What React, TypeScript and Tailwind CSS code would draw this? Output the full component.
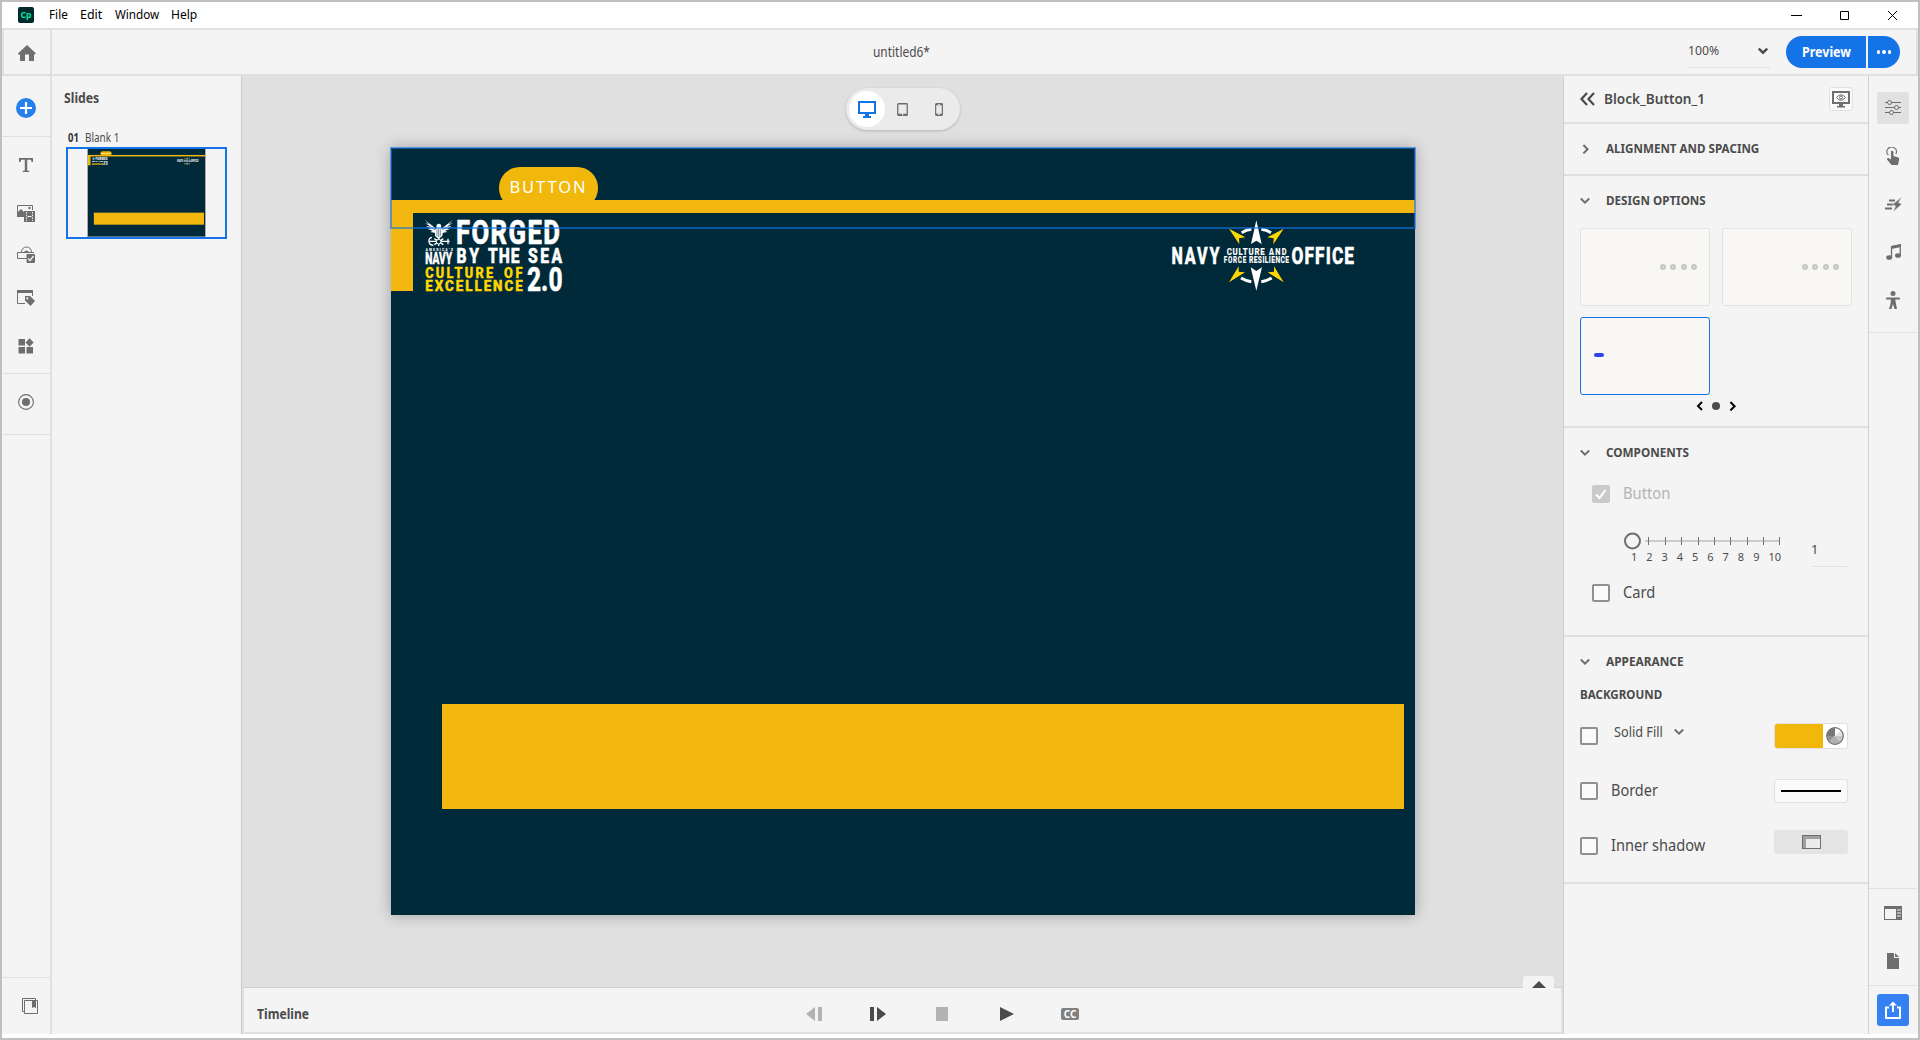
import React, { useLayoutEffect, useRef, useState } from "react";

/** Text run squeezed or stretched horizontally to a given width. */
function Fit({ w, up = 0, gap = "", className = "", children }: { w: number; up?: number; gap?: string; className?: string; children: React.ReactNode }) {
  const ref = useRef<HTMLSpanElement>(null);
  const [k, setK] = useState(1);
  useLayoutEffect(() => {
    if (ref.current) setK(w / ref.current.offsetWidth);
  }, [w]);
  return (
    <span className={"block shrink-0 whitespace-nowrap " + gap} style={{ width: w }}>
      <span ref={ref} className={"block w-max origin-left " + className} style={{ transform: `translateY(${-up}px) scaleX(${k})` }}>
        {children}
      </span>
    </span>
  );
}

function Svg({ w, h, className = "", children }: { w: number; h: number; className?: string; children: React.ReactNode }) {
  return (
    <svg width={w} height={h} viewBox={`0 0 ${w} ${h}`} fill="none" className={"block shrink-0 " + className}>
      {children}
    </svg>
  );
}

const G = "#6e6e6e";

/** One word of a logo: narrowed bold letters spread over the width w. */
function LogoText({ x, y, w, s, k = 0.85, fill = "#fff", children }: { x: number; y: number; w: number; s: number; k?: number; fill?: string; children: string }) {
  return (
    <text transform={`translate(${x} ${y}) scale(${k} 1)`} textLength={w / k} fontSize={s} fill={fill} stroke={fill} strokeWidth={s > 14 ? 0.5 : 0.1} fontWeight={800} fontFamily="Roboto, 'Liberation Sans', sans-serif">
      {children}
    </text>
  );
}

function Art({ small = false }: { small?: boolean }) {
  return (
    <svg viewBox="391 148 1024 767" width={1024} height={767} className="block">
      <rect x="391" y="148" width="1024" height="767" fill="#002a3a" />
      <rect x="499" y="167" width="99" height="42" rx="20.8" fill="#f1b70a" />
      <rect x="391" y="200" width="1024" height="13" fill="#f2b810" />
      <rect x="391" y="200" width="22" height="91" fill="#f2b810" />
      <rect x="442" y="704" width="962" height="105" fill="#f2b810" />
      <text x="509.500" y="193" textLength="76" fontSize="16.500" fill="#fff" fontFamily="'Noto Sans', sans-serif">BUTTON</text>
      {/* Eagle and anchor */}
      <g transform="translate(380 140) scale(.33333)">
        <path d="M135 240 L166 263 L167 279 L151 276 L158 272 L143 267 L153 266 L138 258 L150 259 L135 249 L147 253 Z" fill="#fff" />
        <path d="M218 240 L187 263 L186 279 L202 276 L195 272 L210 267 L200 266 L215 258 L203 259 L218 249 L206 253 Z" fill="#fff" />
        <path d="M141 243 L168 266 M139 254 L166 270 M212 243 L185 266 M214 254 L187 270" stroke="#002a3a" strokeWidth="1.500" />
        <path d="M170 254 Q176 248 183 254 L184 264 L189 272 L187 288 L176 297 L165 288 L165 271 L169 264 Z" fill="#fff" />
        <path d="M171 268 V289 M176 266 V291 M181 268 V289" stroke="#002a3a" strokeWidth="1.600" />
        <path d="M156 292 Q146 294 147 304 Q148 315 160 316 M146 304 H209 M204 296 V313 M163 296 L190 314 M190 296 L163 314 M176 292 V318" stroke="#fff" strokeWidth="4" fill="none" />
        <circle cx="176" cy="305" r="7" fill="#002a3a" stroke="#fff" strokeWidth="3" />
      </g>
      <LogoText x={456} y={244.300} w={104} s={33} k={0.78}>FORGED</LogoText>
      {!small && <LogoText x={425.700} y={251.200} w={27} s={3.400}>AMERICA'S</LogoText>}
      <LogoText x={425.200} y={263.700} w={27} s={16.400} k={0.62}>NAVY</LogoText>
      <LogoText x={456.500} y={263.200} w={22.500} s={19.600} k={0.8}>BY</LogoText>
      <LogoText x={488} y={263.200} w={31.500} s={19.600} k={0.8}>THE</LogoText>
      <LogoText x={528} y={263.200} w={34} s={19.600} k={0.8}>SEA</LogoText>
      <LogoText x={425.200} y={277.500} w={68} s={15.500} k={0.82} fill="#ffd700">CULTURE</LogoText>
      <LogoText x={504} y={277.500} w={18.500} s={15.500} k={0.82} fill="#ffd700">OF</LogoText>
      <LogoText x={425.200} y={290.800} w={97.500} s={15.500} k={0.86} fill="#ffd700">EXCELLENCE</LogoText>
      <LogoText x={527} y={290.500} w={35.500} s={34} k={0.72}>2.0</LogoText>
      <LogoText x={1171.500} y={264.300} w={48} s={23} k={0.7}>NAVY</LogoText>
      <LogoText x={1226.700} y={254.700} w={38} s={9.800} k={0.8}>CULTURE</LogoText>
      <LogoText x={1269} y={254.700} w={17.500} s={9.800} k={0.75}>AND</LogoText>
      <LogoText x={1223.700} y={262.800} w={22.500} s={9} k={0.7}>FORCE</LogoText>
      <LogoText x={1249} y={262.800} w={40} s={9} k={0.74}>RESILIENCE</LogoText>
      <LogoText x={1291.500} y={264.300} w={62.500} s={23} k={0.75}>OFFICE</LogoText>
      <g transform="translate(1150 200) scale(.33333)">
        <path d="M319 61 L335 132 L319 122 L303 132 Z M319 272 L336 202 L319 213 L302 202 Z" fill="#fff" />
        <path d="M237 86 L286 112 L267 115 L268 133 Z M401 86 L352 112 L371 115 L370 133 Z M237 247 L285 217 L266 215 L266 199 Z M401 247 L353 217 L372 215 L372 199 Z" fill="#ffd700" />
        <path d="M275 98 Q288 90 304 88 M363 98 Q350 90 334 88 M273 234 Q288 243 304 245 M365 234 Q350 243 334 245" stroke="#fff" strokeWidth="9" fill="none" />
      </g>
    </svg>
  );
}

function Chevron({ dir = "down", color = G, w = 2 }: { dir?: "down" | "right" | "left"; color?: string; w?: number }) {
  const d = dir === "down" ? "M.8 2.500 L5 6.700 L9.200 2.500" : dir === "right" ? "M3.400 1 L7.600 5.200 L3.400 9.400" : "M7 1 L3 5 L7 9";
  return (
    <Svg w={10} h={10}>
      <path d={d} stroke={color} strokeWidth={w} />
    </Svg>
  );
}

function Section({ title, w, dir = "down" }: { title: string; w: number; dir?: "down" | "right" }) {
  return (
    <div className="flex h-[50px] items-center pl-4">
      <div className="w-[26px]">
        <Chevron dir={dir} />
      </div>
      <Fit w={w} className="text-[12px] font-bold leading-4 text-[#4b4b4b]">{title}</Fit>
    </div>
  );
}

function Box({ checked = false }: { checked?: boolean }) {
  return checked ? (
    <div className="h-[18px] w-[18px] shrink-0 rounded-[2px] bg-[#cacaca]">
      <Svg w={18} h={18}>
        <path d="M4 9.500 L7.500 13 L13.500 5" stroke="#fff" strokeWidth="2" />
      </Svg>
    </div>
  ) : (
    <div className="h-[18px] w-[18px] shrink-0 rounded-[2px] border-2 border-[#909090] bg-[#fafafa]" />
  );
}

function Cell({ h, children }: { h: string; children?: React.ReactNode }) {
  return <div className={"flex w-12 shrink-0 items-center justify-center " + h}>{children}</div>;
}

function LeftRail() {
  return (
    <div className="flex w-12 flex-col">
      <Cell h="h-[61px] border-b border-[#e0e0e0] pt-1">
        <Svg w={20} h={20}>
          <circle cx="10" cy="10" r="10" fill="#2680eb" />
          <path d="M10 4 V16 M4 10 H16" stroke="#fff" strokeWidth="2.200" />
        </Svg>
      </Cell>
      <Cell h="h-[56px]">
        <Svg w={14} h={14}>
          <path d="M0 0 H14 V4 H12.500 L12 1.800 H8.200 V12.400 L10.300 13 V14 H3.700 V13 L5.800 12.400 V1.800 H2 L1.500 4 H0 Z" fill={G} />
        </Svg>
      </Cell>
      <Cell h="h-[41px]">
        <Svg w={18} h={17}>
          <path d="M.5 11 V.5 H15.500 V5" stroke={G} />
          <path d="M0 12 V8 L4 4 L7 7 V12 Z" fill={G} />
          <circle cx="12.500" cy="3" r="1.200" fill={G} />
          <rect x="7" y="6" width="11" height="11" fill={G} />
          <path d="M9.500 7 V16 M15.500 7 V16" stroke="#f4f4f4" strokeDasharray="1.5 1.2" />
          <path d="M10.500 11.500 H14.500" stroke="#f4f4f4" />
        </Svg>
      </Cell>
      <Cell h="h-[41px]">
        <Svg w={18} h={17}>
          <path d="M10 12.500 H.5 V6.500 H17" stroke={G} />
          <path d="M4.500 6 A5 5 0 0 1 14.500 6" stroke={G} />
          <path d="M7 6 A2.800 2.800 0 0 1 12 6 Z" fill={G} />
          <rect x="9.500" y="8" width="8.500" height="9" rx="1" fill={G} />
          <path d="M11 12.500 L13 14.500 L16.500 10" stroke="#f4f4f4" strokeWidth="1.300" />
        </Svg>
      </Cell>
      <Cell h="h-[46px]">
        <Svg w={18} h={16}>
          <path d="M8 13.500 H.5 V1 M15.500 2 V6" stroke={G} />
          <rect width="16" height="3" fill={G} />
          <path d="M8 6 H13 L18 11 L13.500 16 L8 10.500 Z" fill={G} />
          <circle cx="10.300" cy="8.300" r="1.100" fill="#f4f4f4" />
        </Svg>
      </Cell>
      <Cell h="h-[53px] border-b border-[#e0e0e0] pb-[3px]">
        <Svg w={16} h={16}>
          <path d="M.5 1 H7 V7.500 H.5 Z M.5 9 H7 V15.500 H.5 Z M8.500 9 H15 V15.500 H8.500 Z M11.500 .3 L15.700 4.500 L11.500 8.700 L7.500 4.500 Z" fill={G} />
        </Svg>
      </Cell>
      <Cell h="h-[61px] border-b border-[#e0e0e0] pb-1">
        <Svg w={16} h={16}>
          <circle cx="8" cy="8" r="7.400" stroke={G} strokeWidth="1.100" />
          <circle cx="8" cy="8" r="4" fill={G} />
        </Svg>
      </Cell>
      <div className="grow" />
      <Cell h="h-[57px] border-t border-[#e0e0e0] pl-2">
        <Svg w={16} h={16}>
          <path d="M2 13.500 H.5 V.5 H13.500 V2 M2.500 2.500 H15.500 V15.500 H2.500 Z" stroke={G} />
          <path d="M10 3 H14 V10 L12 9 L10 10 Z" fill={G} />
        </Svg>
      </Cell>
    </div>
  );
}

function RightRail() {
  return (
    <div className="flex w-[49px] flex-col border-l border-[#d0d0d0]">
      <Cell h="h-16">
        <div className="flex h-8 w-8 items-center justify-center rounded-[3px] bg-[#e1e1e1]">
          <Svg w={16} h={16}>
            <path d="M0 2.500 H16 M0 7.500 H16 M0 12.500 H16" stroke={G} />
            <circle cx="4.500" cy="2.500" r="2" fill="#e1e1e1" stroke={G} />
            <circle cx="11.500" cy="7.500" r="2" fill="#e1e1e1" stroke={G} />
            <circle cx="6.500" cy="12.500" r="2" fill="#e1e1e1" stroke={G} />
          </Svg>
        </div>
      </Cell>
      <Cell h="h-8">
        <Svg w={14} h={18}>
          <path d="M2.300 8 A4.700 4.700 0 1 1 9.800 7" stroke={G} strokeWidth="1.100" />
          <path d="M5 4.500 Q6.200 3.200 7.400 4.500 V9 L12.500 10.500 Q13.500 11 13 13 L12 18 H5.500 L1 12.500 Q.5 10.800 2.500 11 L5 12.500 Z" fill={G} />
        </Svg>
      </Cell>
      <Cell h="h-16">
        <Svg w={18} h={16}>
          <path d="M5 4.500 H11 M3 8.500 H10 M1 12.500 H8" stroke={G} strokeWidth="2" />
          <path d="M18 .5 L8.500 8.500 L11.500 10 L9 16 L18 8 L14.500 6.500 Z" fill={G} stroke="#f4f4f4" strokeWidth=".6" />
        </Svg>
      </Cell>
      <Cell h="h-8">
        <Svg w={15} h={16}>
          <path d="M5.500 13.500 V2.800 L14.300 1 V11" stroke={G} strokeWidth="1.300" />
          <path d="M5 2 L15 0 V3 L5 5 Z" fill={G} />
          <ellipse cx="3.200" cy="13.500" rx="3" ry="2.300" fill={G} />
          <ellipse cx="12" cy="11.500" rx="3" ry="2.300" fill={G} />
        </Svg>
      </Cell>
      <Cell h="h-[65px] border-b border-[#e0e0e0]">
        <Svg w={14} h={18}>
          <circle cx="7" cy="2.500" r="2.500" fill={G} />
          <path d="M1 7.500 H13" stroke={G} strokeWidth="2.200" strokeLinecap="round" />
          <path d="M5 7 H9 L10 13 L11 18 H8.500 L7 13 L5.500 18 H3 L4.500 13 Z" fill={G} />
        </Svg>
      </Cell>
      <div className="grow" />
      <Cell h="h-[49px] border-t border-[#e0e0e0]">
        <Svg w={18} h={14}>
          <rect x=".5" y=".5" width="17" height="13" stroke={G} />
          <path d="M0 0 H18 V14 H12 V3 H0 Z" fill={G} />
          <path d="M13 4 H17 M13 7 H17 M13 10 H17" stroke="#f4f4f4" />
        </Svg>
      </Cell>
      <Cell h="h-[48px]">
        <Svg w={12} h={16}>
          <path d="M0 0 H7 V5 H12 V16 H0 Z M8 0 L12 4 H8 Z" fill={G} />
        </Svg>
      </Cell>
      <Cell h="h-[49px] border-t border-[#e0e0e0]">
        <div className="flex h-8 w-8 items-center justify-center rounded-[3px] bg-[#3581f2]">
          <Svg w={16} h={18}>
            <path d="M4 6.500 H1 V17 H15 V6.500 H12" stroke="#fff" strokeWidth="2" />
            <path d="M8 11 V3" stroke="#fff" strokeWidth="2" />
            <path d="M8 .5 L12 4.500 H4 Z" fill="#fff" />
          </Svg>
        </div>
      </Cell>
    </div>
  );
}

function Dots() {
  return (
    <div className="flex h-[78px] w-[130px] items-center justify-end gap-1 rounded-[3px] border border-[#e3e3e3] bg-[#f8f7f3] pr-3">
      {[0, 1, 2, 3].map((i) => (
        <div key={i} className="h-[6px] w-[6px] rounded-full border-2 border-[#c6c6c6] bg-[#dcdcdc] [&:not(:first-child)]:ml-[0.4px]" />
      ))}
    </div>
  );
}

function Properties() {
  return (
    <div className="flex w-[305px] flex-col border-l border-[#d0d0d0]">
      <div className="flex h-12 items-center border-b-2 border-[#e0e0e0] pl-4">
        <Svg w={15} h={14}>
          <path d="M7 1 L1.500 7 L7 13 M14 1 L8.500 7 L14 13" stroke="#4b4b4b" strokeWidth="2.200" />
        </Svg>
        <Fit w={101} gap="ml-[9px]" className="text-[14px] font-semibold leading-5 text-[#4b4b4b]">Block_Button_1</Fit>
        <div className="ml-[124px] flex h-6 w-6 items-center justify-center rounded-[3px] border border-[#e0e0e0] bg-[#fafafa]">
          <Svg w={18} h={18}>
            <rect x="1" y="2" width="16" height="11" stroke={G} strokeWidth="2" />
            <path d="M7 13 H11 V16 H13 V17.500 H5 V16 H7 Z" fill={G} />
            <path d="M4.500 7.500 Q9 2 13.500 7.500 Q9 13 4.500 7.500 Z" stroke={G} />
            <circle cx="9" cy="7.500" r="1.500" stroke={G} />
          </Svg>
        </div>
      </div>
      <div className="border-b-2 border-[#e0e0e0]">
        <Section title="ALIGNMENT AND SPACING" w={153} dir="right" />
      </div>
      <div className="h-[252px] border-b-2 border-[#e0e0e0]">
        <Section title="DESIGN OPTIONS" w={100} />
        <div className="grid w-[288px] grid-cols-[130px_130px] gap-x-3 gap-y-[11px] pl-4 pt-[2px]">
          <Dots />
          <Dots />
          <div className="flex h-[78px] items-center rounded-[3px] border border-[#1473e6] bg-[#f8f7f3] pb-[2px] pl-[13px]">
            <div className="h-1 w-[10px] rounded-sm bg-[#2f42f0]" />
          </div>
        </div>
        <div className="flex h-[22px] items-center gap-[7px] pb-px pl-[131px]">
          <Chevron dir="left" color="#000" />
          <div className="h-2 w-2 rounded-full bg-[#4b4b4b]" />
          <Chevron dir="right" color="#000" />
        </div>
      </div>
      <div className="h-[209px] border-b-2 border-[#e0e0e0]">
        <Section title="COMPONENTS" w={83} />
        <div className="flex h-8 items-center pl-7">
          <Box checked />
          <Fit w={47} up={1} gap="ml-[13px]" className="text-[16px] leading-6 text-[#b3b3b3]">Button</Fit>
        </div>
        <div className="flex h-[70px] pl-[59px] pt-[21px]">
          <div className="w-[162px]">
            <Svg w={162} h={20}>
              <path d="M22 10 H157" stroke="#cacaca" strokeWidth="2" />
              <path d="M25.500 6 V14 M42.500 6 V14 M58.500 6 V14 M75.500 6 V14 M91.500 6 V14 M107.500 6 V14 M124.500 6 V14 M140.500 6 V14 M156.500 6 V14" stroke={G} />
              <circle cx="9.500" cy="10" r="7.500" stroke={G} strokeWidth="2" />
            </Svg>
            <div className="flex justify-between pl-[8px] pr-[4px] text-[11px] leading-3 text-[#4b4b4b]">
              {[1, 2, 3, 4, 5, 6, 7, 8, 9, 10].map((n) => (
                <span key={n}>{n}</span>
              ))}
            </div>
          </div>
          <div className="ml-[27px] mt-[9px] h-[27px] w-[35px] border-b border-[#e0e0e0] text-[13px] leading-[18px] text-[#4b4b4b]">
            <span className="-ml-px">1</span>
          </div>
        </div>
        <div className="flex h-[26px] items-center pl-7">
          <Box />
          <Fit w={32} up={1} gap="ml-[13px]" className="text-[16px] leading-6 text-[#4b4b4b]">Card</Fit>
        </div>
      </div>
      <div className="h-[247px] border-b-2 border-[#e0e0e0]">
        <Section title="APPEARANCE" w={78} />
        <div className="flex h-4 items-center pl-4">
          <Fit w={82} className="text-[12px] font-bold leading-4 text-[#4b4b4b]">BACKGROUND</Fit>
        </div>
        <div className="flex h-[66px] items-center pl-4">
          <Box />
          <div className="-mt-2 ml-4 flex w-[160px] items-center gap-[11px]">
            <Fit w={49} className="text-[14px] leading-5 text-[#4b4b4b]">Solid Fill</Fit>
            <Chevron />
          </div>
          <div className="flex h-[26px] w-[74px] overflow-hidden rounded-[3px] border border-[#e0e0e0] bg-white">
            <div className="w-12 bg-[#f1b70a]" />
            <Svg w={24} h={24}>
              <g transform="translate(12 12)">
                <path d="M0 0 V-8 A8 8 0 0 0 -8 0 Z" fill="#777" />
                <path d="M0 0 H-8 A8 8 0 0 0 -5.700 5.700 Z" fill="#909090" />
                <path d="M0 0 L-5.700 5.700 A8 8 0 0 0 5.700 5.700 Z" fill="#b0b0b0" />
                <path d="M0 0 L5.700 5.700 A8 8 0 0 0 8 0 Z" fill="#c4c4c4" />
                <path d="M0 0 H8 A8 8 0 0 0 5.700 -5.700 Z" fill="#e2e2e2" />
                <circle r="8.300" stroke={G} strokeWidth="1.200" />
              </g>
            </Svg>
          </div>
        </div>
        <div className="flex h-11 items-center pl-4">
          <Box />
          <Fit w={47} up={1} gap="ml-[13px]" className="text-[16px] leading-6 text-[#4b4b4b]">Border</Fit>
          <div className="ml-[116px] flex h-6 w-[74px] items-center justify-center rounded-[3px] border border-[#e0e0e0] bg-[#fafafa]">
            <div className="h-[2px] w-[60px] bg-black" />
          </div>
        </div>
        <div className="flex h-[66px] items-center pl-4">
          <Box />
          <Fit w={94} up={1} gap="ml-[13px]" className="text-[16px] leading-6 text-[#4b4b4b]">Inner shadow</Fit>
          <div className="-mt-2 ml-[69px] flex h-6 w-[74px] items-center justify-center rounded-[3px] bg-[#e4e4e4]">
            <Svg w={19} h={14}>
              <rect x=".5" y=".5" width="18" height="13" fill="#a0a0a0" stroke={G} />
              <rect x="4" y="4" width="14" height="9" fill="#ececec" />
            </Svg>
          </div>
        </div>
      </div>
    </div>
  );
}

function DevicePicker() {
  return (
    <div className="absolute left-[604px] top-3 flex h-[42px] w-[114px] items-center rounded-full bg-[#ebebeb] pl-[3px] shadow-[0_1px_3px_rgba(0,0,0,0.2)]">
      <div className="flex h-9 w-9 items-center justify-center rounded-full bg-white">
        <Svg w={18} h={17}>
          <rect x="1" y="1" width="16" height="11" stroke="#1473e6" strokeWidth="2" />
          <path d="M7 13 H11 V15 H13 V17 H5 V15 H7 Z" fill="#1473e6" />
        </Svg>
      </div>
      <div className="flex w-[35px] justify-center">
        <Svg w={11} h={13}>
          <rect x=".75" y=".75" width="9.500" height="11.500" rx=".6" stroke={G} strokeWidth="1.300" />
          <path d="M1 11.500 H10" stroke={G} strokeWidth="1.500" />
          <path d="M5 11.500 H6.200" stroke="#fff" strokeWidth="1.500" />
        </Svg>
      </div>
      <div className="flex w-[37px] justify-center">
        <Svg w={8} h={13}>
          <rect x=".65" y=".65" width="6.700" height="11.700" rx=".6" stroke={G} strokeWidth="1.200" />
          <path d="M1 1.500 H7 M1 11.500 H7" stroke={G} strokeWidth="1.500" />
          <path d="M3.300 11.500 H4.700 M3.300 1.500 H4.700" stroke="#fff" />
        </Svg>
      </div>
    </div>
  );
}

function Timeline() {
  return (
    <div className="relative flex h-[47px] items-center border-2 border-t border-[#e0e0e0] border-t-[#d0d0d0] bg-[#f4f4f4] pl-[13px] pt-[7px]">
      <Fit w={52} className="text-[14px] font-bold leading-5 text-[#4b4b4b]">Timeline</Fit>
      <div className="ml-[497px] flex items-center">
        <Svg w={16} h={14}>
          <path d="M0 7 L9 0 V14 Z M12 0 H16 V14 H12 Z" fill="#b3b3b3" />
        </Svg>
        <Svg w={16} h={14} className="ml-12">
          <path d="M16 7 L7 0 V14 Z M0 0 H4 V14 H0 Z" fill="#4b4b4b" />
        </Svg>
        <div className="ml-[50px] h-[14px] w-3 bg-[#b3b3b3]" />
        <Svg w={14} h={14} className="ml-[52px]">
          <path d="M0 0 L14 7 L0 14 Z" fill="#4b4b4b" />
        </Svg>
        <div className="ml-[47px] flex h-3 w-[18px] items-center justify-center rounded-[2px] bg-[#808080] text-[10px] font-bold leading-3 text-white">CC</div>
      </div>
      <div className="absolute -top-3 right-[7px] flex h-3 w-[31px] items-end justify-center rounded-t-[3px] bg-[#f4f4f4]">
        <Svg w={14} h={7}>
          <path d="M0 7 L7 0 L14 7 Z" fill="#4b4b4b" />
        </Svg>
      </div>
    </div>
  );
}

export default function App() {
  return (
    <div className="flex h-[1040px] w-[1920px] flex-col overflow-hidden border-2 border-[#bfbfbf] bg-white font-['Noto_Sans','Open_Sans',sans-serif]">
      <div className="flex h-[26px] shrink-0 items-center pl-4 text-[13px] text-black">
        <Svg w={16} h={16}>
          <rect width="16" height="16" rx="2" fill="#002b2e" />
          <text x="2.500" y="11.300" fontSize="9" fontWeight="700" textLength="11" lengthAdjust="spacingAndGlyphs" fill="#00e3a0" fontFamily="'Noto Sans', sans-serif">Cp</text>
        </Svg>
        <Fit w={19} up={1} gap="ml-[15px]" className="leading-6">File</Fit>
        <Fit w={22} up={1} gap="ml-3" className="leading-6">Edit</Fit>
        <Fit w={44} up={1} gap="ml-[13px]" className="leading-6">Window</Fit>
        <Fit w={26} up={1} gap="ml-3" className="leading-6">Help</Fit>
        <Svg w={120} h={12} className="ml-auto mr-[15px]">
          <path d="M8 6.500 H19 M57.500 2.500 H65.500 V10.500 H57.500 Z M105 2 L114 11 M114 2 L105 11" stroke="#000" />
        </Svg>
      </div>
      <div className="flex h-12 shrink-0 items-center border-2 border-[#e0e0e0] bg-[#f4f4f4]">
        <div className="flex h-11 w-12 items-center justify-center border-r-2 border-[#e0e0e0] pt-[2px]">
          <Svg w={18} h={16}>
            <path d="M9 0 L18 8.500 L16.500 9.500 H16 V16 H11 V9.500 H7 V16 H2 V9.500 H0 V8.500 Z" fill={G} />
          </Svg>
        </div>
        <Fit w={57} gap="ml-[821px]" className="text-[14px] leading-6 text-[#4b4b4b]">untitled6*</Fit>
        <div className="ml-auto mt-[-1px] flex h-8 w-[82px] items-center justify-between border-b border-[#e0e0e0] pr-[2px]">
          <Fit w={31} up={1} className="text-[13px] leading-6 text-[#4b4b4b]">100%</Fit>
          <Chevron color="#4b4b4b" w={2.4} />
        </div>
        <div className="ml-4 mr-4 flex h-8 gap-[2px]">
          <div className="flex w-20 items-center rounded-l-full bg-[#1473e6] pl-4">
            <Fit w={49} className="text-[14px] font-bold leading-5 text-white">Preview</Fit>
          </div>
          <div className="flex w-8 items-center justify-center gap-[2px] rounded-r-full bg-[#1473e6]">
            <div className="h-[3.5px] w-[3.5px] rounded-full bg-white" />
            <div className="h-[3.5px] w-[3.5px] rounded-full bg-white" />
            <div className="h-[3.5px] w-[3.5px] rounded-full bg-white" />
          </div>
        </div>
      </div>
      <div className="flex h-[958px] shrink-0 bg-[#f4f4f4]">
        <LeftRail />
        <div className="w-[192px] border-l-2 border-r border-[#e0e0e0] border-r-[#ccc]">
          <div className="flex h-8 pl-3 pt-3">
            <Fit w={35} className="text-[14px] font-bold leading-5 text-[#4b4b4b]">Slides</Fit>
          </div>
          <div className="flex h-[39px] gap-1.5 pl-4 pt-[22px]">
            <Fit w={11} className="text-[12px] font-bold leading-4 text-[#323232]">01</Fit>
            <Fit w={34} className="text-[12px] leading-4 text-[#4b4b4b]">Blank 1</Fit>
          </div>
          <div className="ml-[14px] flex h-[92px] w-[161px] justify-center border-2 border-[#1473e6]">
            <div className="h-[88px] w-[119px] overflow-hidden border-x border-[#aaa]">
              <div className="h-[767px] w-[1024px] origin-top-left scale-[0.1145]">
                <Art small />
              </div>
            </div>
          </div>
        </div>
        <div className="flex w-[1321px] flex-col">
          <div className="relative h-[911px] overflow-hidden bg-[#e0e0e0]">
            <DevicePicker />
            <div className="absolute left-[149px] top-[72px] h-[767px] w-[1024px] shadow-[0_0_14px_rgba(0,0,0,0.3)]">
              <Art />
              <div className="absolute -left-px -top-px h-[82px] w-[1026px] border-2 border-[#1473e6]/60" />
            </div>
          </div>
          <Timeline />
        </div>
        <Properties />
        <RightRail />
      </div>
    </div>
  );
}
